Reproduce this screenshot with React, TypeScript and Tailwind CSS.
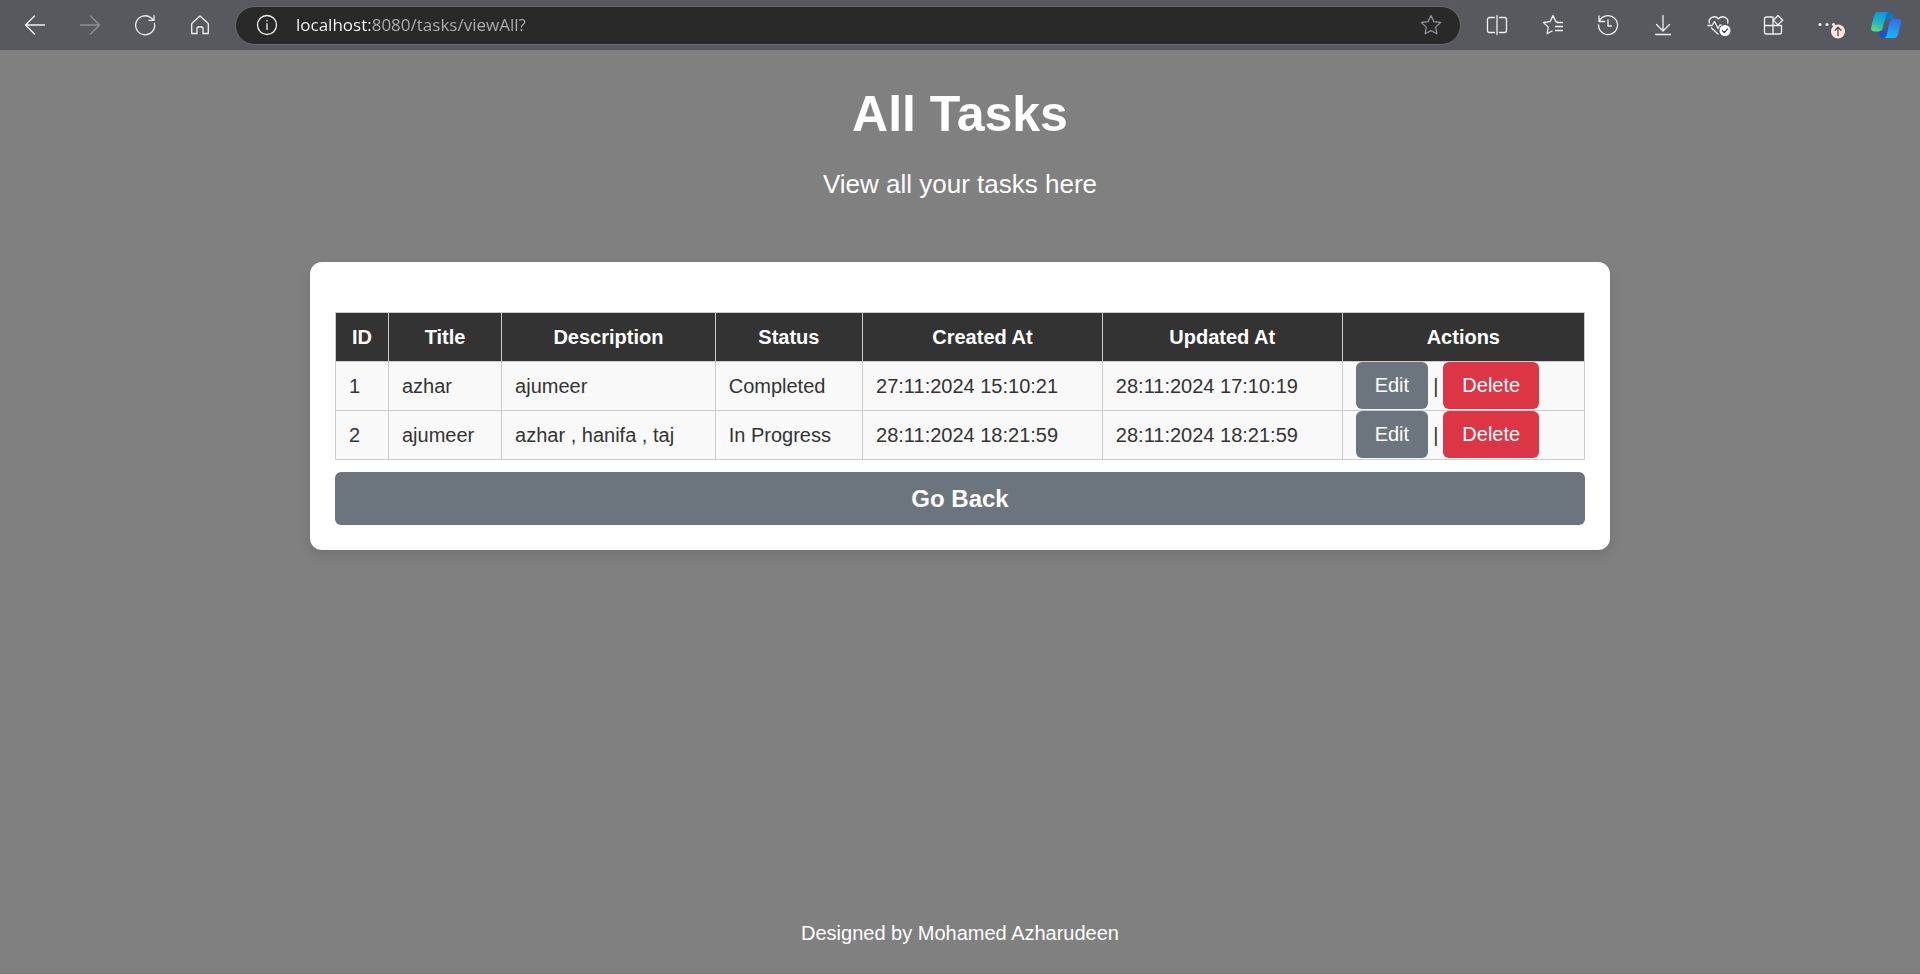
import type { ReactNode } from "react";

type Task = {
  id: number;
  title: string;
  description: string;
  status: string;
  createdAt: string;
  updatedAt: string;
};

const tasks: Task[] = [
  { id: 1, title: "azhar", description: "ajumeer", status: "Completed", createdAt: "27:11:2024 15:10:21", updatedAt: "28:11:2024 17:10:19" },
  { id: 2, title: "ajumeer", description: "azhar , hanifa , taj", status: "In Progress", createdAt: "28:11:2024 18:21:59", updatedAt: "28:11:2024 18:21:59" },
];

const columns = [
  { name: "ID", width: "w-[4.24%]" },
  { name: "Title", width: "w-[9.06%]" },
  { name: "Description", width: "w-[17.1%]" },
  { name: "Status", width: "w-[11.8%]" },
  { name: "Created At", width: "w-[19.2%]" },
  { name: "Updated At", width: "w-[19.2%]" },
  { name: "Actions", width: "w-[19.4%]" },
];

const cell = "border border-[#ccc] px-[13px] pb-px";

function Icon({ children }: { children: ReactNode }) {
  return (
    <svg viewBox="0 0 24 24" className="size-6 overflow-visible" fill="none" stroke="currentColor" strokeWidth="1.3" strokeLinecap="round" strokeLinejoin="round" aria-hidden="true">
      {children}
    </svg>
  );
}

function ToolButton({ label, dim, children }: { label: string; dim?: boolean; children: ReactNode }) {
  return (
    <button type="button" aria-label={label} className={dim ? "text-[#8f9094]" : "text-[#f0f0f0]"}>
      {children}
    </button>
  );
}

function Copilot() {
  return (
    <svg viewBox="0 0 32 28" className="h-7 w-8" aria-hidden="true">
      <defs>
        <linearGradient id="cpLeft" x1="0.6" y1="0" x2="0.3" y2="1">
          <stop offset="0" stopColor="#1095e0" />
          <stop offset="0.5" stopColor="#18b3c4" />
          <stop offset="1" stopColor="#5fd98a" />
        </linearGradient>
        <linearGradient id="cpRight" x1="0.5" y1="0" x2="0.4" y2="1">
          <stop offset="0" stopColor="#2f6fe6" />
          <stop offset="0.5" stopColor="#2492f4" />
          <stop offset="1" stopColor="#19b9f8" />
        </linearGradient>
        <linearGradient id="cpTop" x1="0" y1="0" x2="1" y2="1">
          <stop offset="0" stopColor="#0a6fa8" />
          <stop offset="1" stopColor="#0f86c6" />
        </linearGradient>
      </defs>
      <path d="M12 1h7.400c1.600 0 2.600.9 3.100 2.400L23.800 7.800H19c-2.500 0-3.700 1.300-4.400 3.500L12 8z" fill="url(#cpTop)" />
      <path d="M19.500 27h-6.300c-1.700 0-2.700-1-3.200-2.500L8.500 20H13c2.500 0 3.600-1.400 4.300-3.500L20 18z" fill="#1c4fd8" />
      <path d="M8.500 1h10.300c-1.500.6-2.300 1.800-2.800 3.500L12.600 17c-.7 2.200-2 3.400-4.500 3.400H4.200C1.800 20.400.6 18.700 1.200 16.300L4 5.200C4.800 2.500 6 1 8.500 1z" fill="url(#cpLeft)" />
      <path d="M23.700 27h-9.700c1.500-.6 2.300-1.800 2.800-3.500L19.600 11c.7-2.200 2-3.300 4.300-3.300h4c2.400 0 3.500 1.700 2.900 4L28.200 22.700C27.400 25.500 26.200 27 23.700 27z" fill="url(#cpRight)" />
    </svg>
  );
}

function BrowserBar() {
  return (
    <header className="flex h-[50px] items-center bg-[#58595f] pr-[18px] pl-[23px]">
      <nav aria-label="Navigation" className="flex gap-[31px]">
        <ToolButton label="Back">
          <Icon><path d="M21.500 12H2.600M11.500 3 2.500 12l9 9" /></Icon>
        </ToolButton>
        <ToolButton label="Forward" dim>
          <Icon><path d="M2.500 12h18.900M12.500 3l9 9-9 9" /></Icon>
        </ToolButton>
        <ToolButton label="Refresh">
          <Icon><path d="M21.500 10.500A9.500 9.500 0 1 1 18 4.800L20.700 7.200M21 2.600V7.400H16" /></Icon>
        </ToolButton>
        <ToolButton label="Home">
          <Icon><path d="M4.500 9.800 12 3l7.500 6.800a2 2 0 0 1 .8 1.500V20.500H15V15.500A1.500 1.500 0 0 0 13.500 14h-3A1.500 1.500 0 0 0 9 15.500v5H3.700V11.300a2 2 0 0 1 .8-1.500z" /></Icon>
        </ToolButton>
      </nav>
      <form className="ml-[23px] flex h-[39px] flex-1 items-center rounded-full border border-[#6b6b6b] bg-[#292929] pr-[17px] pl-[19px]">
        <ToolButton label="View site information">
          <Icon><circle cx="12" cy="12" r="9.500" /><path d="M12 10.700v5.800M12 7.500v.4" /></Icon>
        </ToolButton>
        <input
          type="text"
          aria-label="Address"
          defaultValue="localhost:8080/tasks/viewAll?"
          className="ml-[17px] min-w-0 flex-1 bg-[linear-gradient(90deg,#ffffff_74px,#b0b0b0_74px)] bg-clip-text font-['Open_Sans',sans-serif] text-[17px] leading-6 text-transparent outline-none"
        />
        <ToolButton label="Add to favorites" dim>
          <Icon><path d="m12 2.500 2.900 6.100 6.700.9-4.900 4.600 1.200 6.700L12 17.600l-5.900 3.200 1.200-6.700L2.400 9.500l6.700-.9z" /></Icon>
        </ToolButton>
      </form>
      <div className="ml-6 flex items-center gap-[31px]">
        <ToolButton label="Split screen">
          <Icon><path d="M9.500 4.500H4.500a2 2 0 0 0-2 2v11a2 2 0 0 0 2 2h5M14.500 4.500h5a2 2 0 0 1 2 2v11a2 2 0 0 1-2 2h-5M12 2.500v19" /></Icon>
        </ToolButton>
        <ToolButton label="Favorites">
          <Icon><path transform="translate(1 0)" d="M16.500 9.200l-1.600-.6L12 2.500 9.100 8.600 2.400 9.500l4.900 4.600-1.200 6.700 5-2.800M16 9.500h5.500M14.500 13.500h7M14.500 17.500h7" /></Icon>
        </ToolButton>
        <ToolButton label="History">
          <Icon><path transform="translate(1 0)" d="M3.200 8.500A9.500 9.500 0 1 1 2.500 12M3 3v5.500h5.500M12 7v6h3.500" /></Icon>
        </ToolButton>
        <ToolButton label="Downloads">
          <Icon><path transform="translate(1 0)" d="M12 2.500v15.300M5.500 11.500l6.500 6.500 6.500-6.500M4.500 21.500h15" /></Icon>
        </ToolButton>
        <ToolButton label="Browser essentials">
          <Icon>
            <g transform="translate(1.500 0)">
              <path d="M2.800 10C1.500 5 8 1.500 12 5.800 16 1.500 22.500 5 21.200 10M1.500 12.500h4l2.500-4 3.500 7 2-3.500h1M5 15l6.500 6" />
              <circle cx="18.500" cy="17.500" r="5.500" fill="#fff" stroke="none" />
              <path d="m16 17.700 1.800 1.800 3.400-3.600" stroke="#444" />
            </g>
          </Icon>
        </ToolButton>
        <ToolButton label="Extensions">
          <Icon><path transform="translate(1.500 0)" d="M11.500 4H5a2 2 0 0 0-2 2v13a2 2 0 0 0 2 2h13a2 2 0 0 0 2-2v-6.500H3M11.500 4v17M16.500 2.500l4.700 4.700-4.700 4.700-4.700-4.700z" /></Icon>
        </ToolButton>
        <ToolButton label="Settings and more, update available">
          <Icon>
            <g fill="currentColor" stroke="none">
              <circle cx="5" cy="11.500" r="1.500" />
              <circle cx="12" cy="11.500" r="1.500" />
              <circle cx="18.500" cy="11.500" r="1.500" />
            </g>
            <circle cx="23" cy="18.500" r="7" fill="#fde3e1" stroke="none" />
            <path d="M23 22.500v-8M20 17.200l3-3 3 3" stroke="#4a4a4a" />
          </Icon>
        </ToolButton>
        <ToolButton label="Copilot">
          <Copilot />
        </ToolButton>
      </div>
    </header>
  );
}

export default function App() {
  return (
    <div className="flex min-h-screen flex-col border-b border-[#7b757a] bg-[#808080] font-['Liberation_Sans',Arial,sans-serif] text-xl leading-6 text-[#333]">
      <BrowserBar />
      <div className="pt-[35px] text-center text-white">
        <h1 className="text-[50px] leading-[58px] font-bold">All Tasks</h1>
        <p className="mt-[25px] text-[26px] leading-8">View all your tasks here</p>
      </div>
      <main className="mx-auto mt-[62px] w-full max-w-[1300px] rounded-xl bg-white px-[25px] pt-[50px] pb-[25px] shadow-[0_5px_12px_rgba(0,0,0,0.12)]">
        <table className="w-full table-fixed border-collapse">
          <thead>
            <tr className="h-[49px] bg-[#333] text-white">
              {columns.map((c) => (
                <th key={c.name} scope="col" className={`${c.width} border border-[#ccc] px-3 pb-px font-bold`}>{c.name}</th>
              ))}
            </tr>
          </thead>
          <tbody>
            {tasks.map((t) => (
              <tr key={t.id} className="h-[49px] bg-[#f9f9f9]">
                <td className={cell}>{t.id}</td>
                <td className={cell}>{t.title}</td>
                <td className={cell}>{t.description}</td>
                <td className={cell}>{t.status}</td>
                <td className={cell}>{t.createdAt}</td>
                <td className={cell}>{t.updatedAt}</td>
                <td className={cell}>
                  <div className="flex items-center gap-[5px]">
                    <a href="#edit" className="rounded-md bg-[#6c757d] px-[19px] py-[11px] leading-[25px] text-white">Edit</a>
                    <span>|</span>
                    <a href="#delete" className="rounded-md bg-[#dc3545] px-[19px] py-[11px] leading-[25px] text-white">Delete</a>
                  </div>
                </td>
              </tr>
            ))}
          </tbody>
        </table>
        <button type="button" className="mt-3 h-[53px] w-full rounded-md bg-[#6c757d] text-2xl font-bold text-white">Go Back</button>
      </main>
      <footer className="mt-auto pb-7 text-center text-white">Designed by Mohamed Azharudeen</footer>
    </div>
  );
}
